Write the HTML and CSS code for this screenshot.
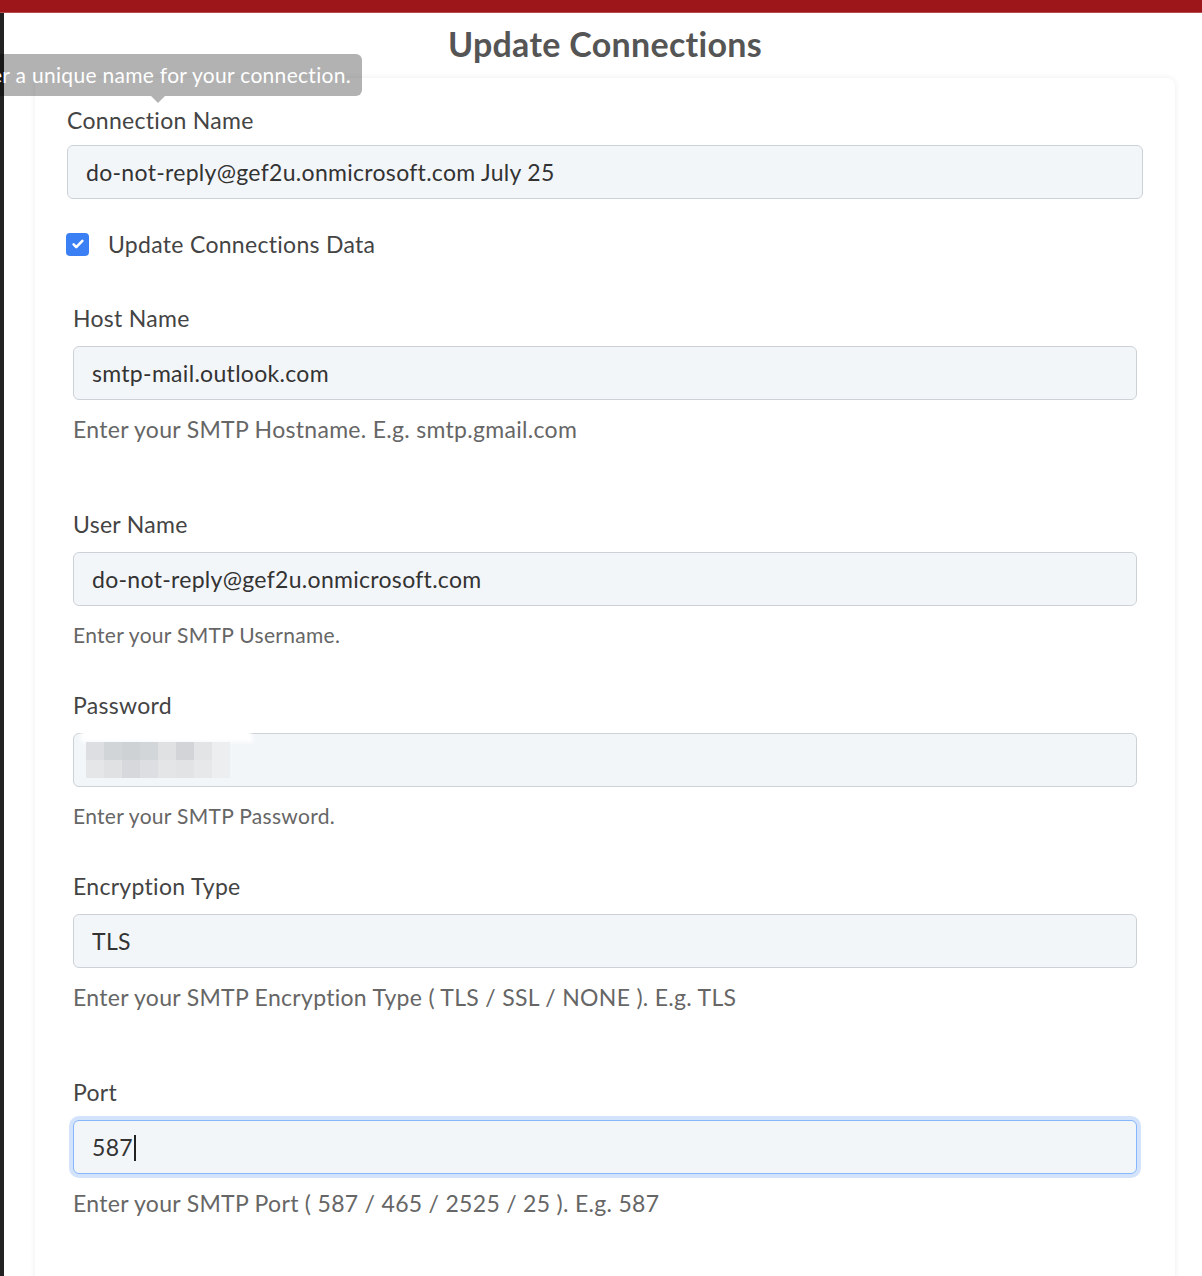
FILE: index.html
```html
<!DOCTYPE html>
<html lang="en">
  <head>
    <meta charset="UTF-8" />
    <title>Update Connections</title>
    <link rel="stylesheet" href="styles.css">
  </head>
  <body>
    <div class="topbar"></div>
    <div class="page">
      <div class="side-strip"></div>
      <div class="content">
        <h1>Update Connections</h1>

        <div class="tooltip">Enter a unique name for your connection.</div>

        <div class="card">
          <div class="field first">
            <label for="connName">Connection Name</label>
            <input id="connName" type="text" value="do-not-reply@gef2u.onmicrosoft.com July 25" />
          </div>

          <div class="check-row">
            <span class="checkbox">
              <svg width="14" height="14" viewBox="0 0 16 16">
                <path d="M3 8.5l3 3 7-7" fill="none" stroke="#fff" stroke-width="3" stroke-linecap="round" stroke-linejoin="round" />
              </svg>
            </span>
            <span class="check-label">Update Connections Data</span>
          </div>

          <div class="conn-data">
            <div class="field">
              <label for="hostName">Host Name</label>
              <input id="hostName" type="text" value="smtp-mail.outlook.com" />
              <p class="help big">Enter your SMTP Hostname. E.g. smtp.gmail.com</p>
            </div>

            <div class="field">
              <label for="userName">User Name</label>
              <input id="userName" type="text" value="do-not-reply@gef2u.onmicrosoft.com" />
              <p class="help">Enter your SMTP Username.</p>
            </div>

            <div class="field">
              <label for="password">Password</label>
              <div class="pw-wrap">
                <input id="password" type="text" value="" />
                <div class="pw-smudge"></div>
                <div class="pw-blur">
                  <span style="background:#dcdee1"></span><span style="background:#d2d5d8"></span><span style="background:#cfd2d5"></span><span style="background:#d3d6d9"></span><span style="background:#dfe1e3"></span><span style="background:#d2d4d7"></span><span style="background:#e2e4e6"></span><span style="background:#eceef0"></span>
                  <span style="background:#e4e6e8"></span><span style="background:#dfe1e3"></span><span style="background:#d6d8db"></span><span style="background:#dcdee1"></span><span style="background:#e3e5e7"></span><span style="background:#e1e3e5"></span><span style="background:#e6e8ea"></span><span style="background:#eceef0"></span>
                </div>
              </div>
              <p class="help">Enter your SMTP Password.</p>
            </div>

            <div class="field">
              <label for="encType">Encryption Type</label>
              <input id="encType" type="text" value="TLS" />
              <p class="help big">Enter your SMTP Encryption Type ( TLS / SSL / NONE ). E.g. TLS</p>
            </div>

            <div class="field">
              <label for="port">Port</label>
              <div class="input focused" id="port">587<span class="caret"></span></div>
              <p class="help big">Enter your SMTP Port ( 587 / 465 / 2525 / 25 ). E.g. 587</p>
            </div>
          </div>
        </div>
      </div>
    </div>
  </body>
</html>
```

FILE: styles.css
```css
body {
  margin: 0;
  background: #fff;
  font-family: Lato, "Open Sans", sans-serif;
  color: #444;
  letter-spacing: 0.3px;
  overflow: hidden;
}

.topbar {
  height: 12px;
  background: #9d161a;
  border-bottom: 1px solid #b9494c;
}

.page {
  display: flex;
  position: relative;
  min-height: 1263px;
}

.side-strip {
  width: 4px;
  background: #222;
}

.content {
  flex: 1;
  padding: 0 27px 0 31px;
}

h1 {
  margin: 11px 0 0;
  height: 54px;
  line-height: 40px;
  text-align: center;
  font-size: 34px;
  font-weight: 700;
  color: #555;
  letter-spacing: 0.3px;
}

.tooltip {
  position: absolute;
  top: 41px;
  right: calc(100% - 362px);
  height: 42px;
  line-height: 42px;
  padding: 0 11px;
  white-space: nowrap;
  background: rgba(0, 0, 0, 0.3);
  color: #fff;
  font-size: 21px;
  border-radius: 6px;
  z-index: 2;
}

.tooltip::after {
  content: "";
  position: absolute;
  bottom: -7px;
  right: 197px;
  border-left: 7px solid transparent;
  border-right: 7px solid transparent;
  border-top: 7px solid rgba(0, 0, 0, 0.3);
}

.card {
  background: #fff;
  border-radius: 8px;
  box-shadow: 0 0 6px rgba(0, 0, 0, 0.08);
  padding: 27px 32px 60px;
  min-height: 1200px;
}

.field {
  display: flex;
  flex-direction: column;
  margin-bottom: 40px;
}

.field.first {
  margin-bottom: 0;
}

label {
  display: block;
  font-size: 23px;
  line-height: 30px;
  margin-bottom: 13px;
  color: #444;
}

.field.first label {
  margin-bottom: 10px;
}

input,
.input {
  box-sizing: border-box;
  height: 54px;
  width: 100%;
  padding: 0 18px;
  font-family: Lato, "Open Sans", sans-serif;
  font-size: 23px;
  letter-spacing: 0.3px;
  line-height: 52px;
  color: #333;
  background: #f3f6f9;
  border: 1px solid #ccd2d8;
  border-radius: 6px;
  outline: none;
}

.input.focused {
  border-color: #86b6fb;
  box-shadow: 0 0 0 4px #d3e3fc;
}

.caret {
  display: inline-block;
  width: 2px;
  height: 26px;
  margin-left: 1px;
  vertical-align: -5px;
  background: #222;
}

.help {
  margin: 14px 0 0;
  font-size: 21px;
  line-height: 30px;
  color: #666;
}

.help.big {
  font-size: 23px;
  margin-bottom: 25px;
}

.check-row {
  display: flex;
  align-items: center;
  gap: 19px;
  height: 30px;
  margin: 30px 0 44px -1px;
}

.checkbox {
  width: 23px;
  height: 23px;
  border-radius: 4px;
  background: #3b7ff5;
  display: flex;
  align-items: center;
  justify-content: center;
}

.check-label {
  font-size: 23px;
  color: #444;
}

.conn-data {
  padding: 0 6px;
}

.pw-wrap {
  position: relative;
}

.pw-smudge {
  position: absolute;
  left: 8px;
  top: -9px;
  width: 172px;
  height: 18px;
  background: #fff;
  border-radius: 10px 40px 0 0;
  filter: blur(2px);
}

.pw-blur {
  position: absolute;
  left: 13px;
  top: 9px;
  width: 144px;
  display: grid;
  grid-template-columns: repeat(8, 18px);
  grid-auto-rows: 18px;
  filter: blur(0.4px);
}
```
